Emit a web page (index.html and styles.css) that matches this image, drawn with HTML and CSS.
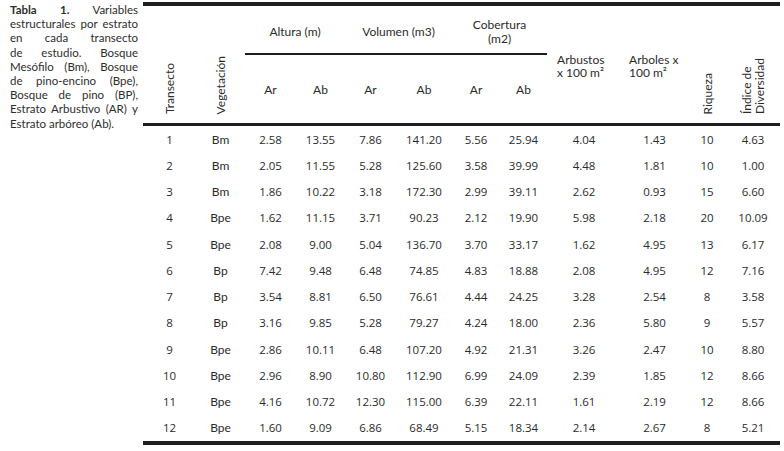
FILE: index.html
```html
<!DOCTYPE html>
<html lang="es">
<head>
<meta charset="utf-8">
<link rel="stylesheet" href="styles.css">
</head>
<body>
<div class="page">
  <p class="caption">
    <span class="ln"><b>Tabla 1.</b> Variables</span>
    <span class="ln">estructurales por estrato</span>
    <span class="ln">en cada transecto</span>
    <span class="ln">de estudio. Bosque</span>
    <span class="ln">Mesófilo (Bm), Bosque</span>
    <span class="ln">de pino-encino (Bpe),</span>
    <span class="ln">Bosque de pino (BP),</span>
    <span class="ln">Estrato Arbustivo (AR) y</span>
    <span class="ln last">Estrato arbóreo (Ab).</span>
  </p>
  <table class="data">
    <colgroup>
      <col class="c1"><col class="c2"><col class="c3"><col class="c4"><col class="c5"><col class="c6"><col class="c7"><col class="c8"><col class="c9"><col class="c10"><col class="c11"><col class="c12">
    </colgroup>
    <thead>
      <tr class="h1">
        <th rowspan="2" class="rot"><span>Transecto</span></th>
        <th rowspan="2" class="rot"><span>Vegetación</span></th>
        <th colspan="2" class="grp">Altura (m)</th>
        <th colspan="2" class="grp">Volumen (m3)</th>
        <th colspan="2" class="grp">Cobertura<br>(m2)</th>
        <th rowspan="2" class="left pl10">Arbustos<br>x 100 m²</th>
        <th rowspan="2" class="left pl8">Arboles x<br>100 m²</th>
        <th rowspan="2" class="rot"><span>Riqueza</span></th>
        <th rowspan="2" class="rot"><span>Índice de<br>Diversidad</span></th>
      </tr>
      <tr class="h2">
        <th>Ar</th><th>Ab</th><th>Ar</th><th>Ab</th><th>Ar</th><th>Ab</th>
      </tr>
    </thead>
    <tbody>
      <tr><td>1</td><td class="veg">Bm</td><td>2.58</td><td>13.55</td><td>7.86</td><td>141.20</td><td>5.56</td><td>25.94</td><td>4.04</td><td>1.43</td><td>10</td><td>4.63</td></tr>
      <tr><td>2</td><td class="veg">Bm</td><td>2.05</td><td>11.55</td><td>5.28</td><td>125.60</td><td>3.58</td><td>39.99</td><td>4.48</td><td>1.81</td><td>10</td><td>1.00</td></tr>
      <tr><td>3</td><td class="veg">Bm</td><td>1.86</td><td>10.22</td><td>3.18</td><td>172.30</td><td>2.99</td><td>39.11</td><td>2.62</td><td>0.93</td><td>15</td><td>6.60</td></tr>
      <tr><td>4</td><td class="veg">Bpe</td><td>1.62</td><td>11.15</td><td>3.71</td><td>90.23</td><td>2.12</td><td>19.90</td><td>5.98</td><td>2.18</td><td>20</td><td>10.09</td></tr>
      <tr><td>5</td><td class="veg">Bpe</td><td>2.08</td><td>9.00</td><td>5.04</td><td>136.70</td><td>3.70</td><td>33.17</td><td>1.62</td><td>4.95</td><td>13</td><td>6.17</td></tr>
      <tr><td>6</td><td class="veg">Bp</td><td>7.42</td><td>9.48</td><td>6.48</td><td>74.85</td><td>4.83</td><td>18.88</td><td>2.08</td><td>4.95</td><td>12</td><td>7.16</td></tr>
      <tr><td>7</td><td class="veg">Bp</td><td>3.54</td><td>8.81</td><td>6.50</td><td>76.61</td><td>4.44</td><td>24.25</td><td>3.28</td><td>2.54</td><td>8</td><td>3.58</td></tr>
      <tr><td>8</td><td class="veg">Bp</td><td>3.16</td><td>9.85</td><td>5.28</td><td>79.27</td><td>4.24</td><td>18.00</td><td>2.36</td><td>5.80</td><td>9</td><td>5.57</td></tr>
      <tr><td>9</td><td class="veg">Bpe</td><td>2.86</td><td>10.11</td><td>6.48</td><td>107.20</td><td>4.92</td><td>21.31</td><td>3.26</td><td>2.47</td><td>10</td><td>8.80</td></tr>
      <tr><td>10</td><td class="veg">Bpe</td><td>2.96</td><td>8.90</td><td>10.80</td><td>112.90</td><td>6.99</td><td>24.09</td><td>2.39</td><td>1.85</td><td>12</td><td>8.66</td></tr>
      <tr><td>11</td><td class="veg">Bpe</td><td>4.16</td><td>10.72</td><td>12.30</td><td>115.00</td><td>6.39</td><td>22.11</td><td>1.61</td><td>2.19</td><td>12</td><td>8.66</td></tr>
      <tr><td>12</td><td class="veg">Bpe</td><td>1.60</td><td>9.09</td><td>6.86</td><td>68.49</td><td>5.15</td><td>18.34</td><td>2.14</td><td>2.67</td><td>8</td><td>5.21</td></tr>
    </tbody>
  </table>
</div>
</body>
</html>
```

FILE: styles.css
```css
html, body {
  margin: 0;
  padding: 0;
  background: #ffffff;
}

.page {
  display: flex;
  align-items: flex-start;
  width: 784px;
  height: 451px;
  overflow: hidden;
}

.caption {
  width: 128px;
  margin: 3px 0 0 10px;
  font-family: Lato, "Open Sans", sans-serif;
  font-size: 11.5px;
  line-height: 14.2px;
  color: #2e2e2e;
}

.caption .ln {
  display: block;
  text-align: justify;
  text-align-last: justify;
  white-space: nowrap;
}

.caption .ln.last {
  text-align: left;
  text-align-last: left;
}

.caption b {
  font-weight: 700;
}

.data {
  margin: 2px 0 0 5px;
  border-collapse: separate;
  border-spacing: 0;
  table-layout: fixed;
  width: 637px;
  border-top: 4px solid #1e1e1e;
  border-bottom: 4px solid #1e1e1e;
  color: #2b2b2b;
}

.c1 { width: 53px; }
.c2 { width: 49px; }
.c3 { width: 51px; }
.c4 { width: 49px; }
.c5 { width: 51px; }
.c6 { width: 56px; }
.c7 { width: 48px; }
.c8 { width: 47px; }
.c9 { width: 74px; }
.c10 { width: 67px; }
.c11 { width: 38px; }
.c12 { width: 54px; }

th {
  font-family: Lato, "Open Sans", sans-serif;
  font-weight: 400;
  font-size: 12px;
  line-height: 13.5px;
  padding: 0;
  text-align: center;
  vertical-align: middle;
  border-bottom: 3px solid #1e1e1e;
}

.h1 {
  height: 49px;
}

.h1 th.grp {
  border-bottom: 2px solid #1e1e1e;
  padding-top: 4px;
}

.h2 th {
  height: 66px;
  padding-top: 2px;
}

th.left {
  text-align: left;
  padding-top: 3px;
}

.pl10 { padding-left: 10px; }
.pl8 { padding-left: 8px; }

th.rot {
  vertical-align: bottom;
  padding-bottom: 6px;
}

th.rot span {
  display: inline-block;
  writing-mode: vertical-rl;
  transform: rotate(180deg);
  text-align: left;
  line-height: 13px;
}

td {
  font-family: "Open Sans", "Noto Sans", sans-serif;
  font-size: 11.5px;
  height: 26.25px;
  padding: 0;
  text-align: center;
  vertical-align: middle;
}

td.veg {
  font-family: Lato, "Open Sans", sans-serif;
  font-size: 12px;
}
```
